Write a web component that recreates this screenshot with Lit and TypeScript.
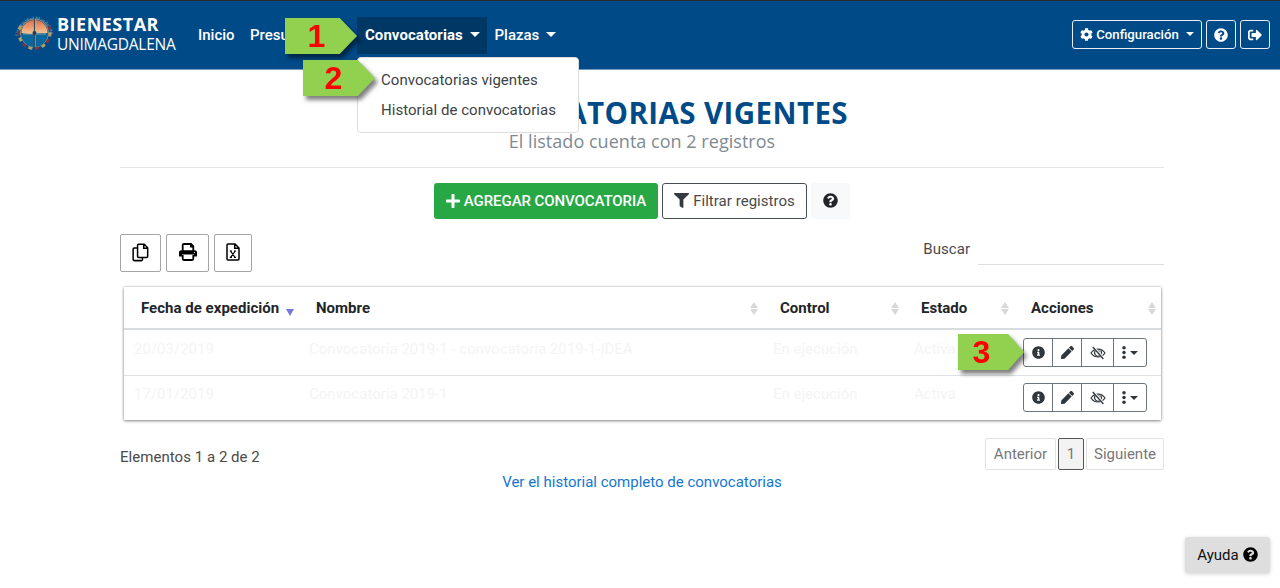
import { LitElement, html, css, svg } from "lit";
import { customElement, property } from "lit/decorators.js";

const ICONS: Record<string, { box: string; body: unknown }> = {
  question: { box: "0 0 512 512", body: svg`<path d="M504 256c0 136.997-111.043 248-248 248S8 392.997 8 256C8 119.083 119.043 8 256 8s248 111.083 248 248zM262.655 90c-54.497 0-89.255 22.957-116.549 63.758-3.536 5.286-2.353 12.415 2.715 16.258l34.699 26.31c5.205 3.947 12.621 3.008 16.665-2.122 17.864-22.658 30.113-35.797 57.303-35.797 20.429 0 45.698 13.148 45.698 32.958 0 14.976-12.363 22.667-32.534 33.976C247.128 238.528 216 254.941 216 296v4c0 6.627 5.373 12 12 12h56c6.627 0 12-5.373 12-12v-1.333c0-28.462 83.186-29.647 83.186-106.667 0-58.002-60.165-102-116.531-102zM256 338c-25.365 0-46 20.635-46 46 0 25.364 20.635 46 46 46s46-20.636 46-46c0-25.365-20.635-46-46-46z"/>` },
  info: { box: "0 0 512 512", body: svg`<path d="M256 8C119.043 8 8 119.083 8 256c0 136.997 111.043 248 248 248s248-111.003 248-248C504 119.083 392.957 8 256 8zm0 110c23.196 0 42 18.804 42 42s-18.804 42-42 42-42-18.804-42-42 18.804-42 42-42zm56 254c0 6.627-5.373 12-12 12h-88c-6.627 0-12-5.373-12-12v-24c0-6.627 5.373-12 12-12h12v-64h-12c-6.627 0-12-5.373-12-12v-24c0-6.627 5.373-12 12-12h64c6.627 0 12 5.373 12 12v100h12c6.627 0 12 5.373 12 12v24z"/>` },
  plus: { box: "0 0 448 512", body: svg`<path d="M416 208H272V64c0-17.670-14.330-32-32-32h-32c-17.670 0-32 14.330-32 32v144H32c-17.670 0-32 14.330-32 32v32c0 17.670 14.330 32 32 32h144v144c0 17.670 14.330 32 32 32h32c17.670 0 32-14.330 32-32V304h144c17.670 0 32-14.330 32-32v-32c0-17.670-14.330-32-32-32z"/>` },
  filter: { box: "0 0 512 512", body: svg`<path d="M487.976 0H24.028C2.710 0-8.047 25.866 7.058 40.971L192 225.941V432c0 7.831 3.821 15.170 10.237 19.662l80 55.980C298.020 518.690 320 507.493 320 487.980V225.941l184.947-184.970C520.021 25.896 509.338 0 487.976 0z"/>` },
  exit: { box: "0 0 512 512", body: svg`<path d="M497 273L329 441c-15 15-41 4.500-41-17v-96H152c-13.300 0-24-10.700-24-24v-96c0-13.300 10.700-24 24-24h136V88c0-21.400 25.900-32 41-17l168 168c9.300 9.400 9.300 24.600 0 34zM192 436v-40c0-6.600-5.400-12-12-12H96c-17.700 0-32-14.300-32-32V160c0-17.700 14.300-32 32-32h84c6.600 0 12-5.400 12-12V76c0-6.600-5.400-12-12-12H96c-53 0-96 43-96 96v192c0 53 43 96 96 96h84c6.600 0 12-5.400 12-12z"/>` },
  cog: { box: "0 0 512 512", body: svg`<path d="M487.4 315.7l-42.6-24.6c4.3-23.2 4.3-47 0-70.2l42.6-24.6c4.9-2.8 7.1-8.6 5.5-14-11.1-35.6-30-67.8-54.7-94.6-3.8-4.1-10-5.1-14.8-2.3L380.8 110c-17.9-15.4-38.5-27.3-60.8-35.1V25.800c0-5.600-3.900-10.500-9.400-11.700-36.700-8.200-74.300-7.800-109.200 0-5.500 1.200-9.400 6.100-9.400 11.700V75c-22.200 7.900-42.800 19.800-60.800 35.100L88.700 85.500c-4.900-2.800-11-1.900-14.800 2.300-24.700 26.700-43.600 58.900-54.700 94.600-1.700 5.400.6 11.200 5.500 14L67.300 221c-4.300 23.200-4.300 47 0 70.200l-42.600 24.600c-4.900 2.800-7.100 8.600-5.500 14 11.100 35.600 30 67.800 54.700 94.600 3.800 4.100 10 5.100 14.800 2.300l42.600-24.600c17.900 15.400 38.500 27.300 60.800 35.100v49.200c0 5.600 3.900 10.500 9.400 11.700 36.700 8.200 74.300 7.800 109.200 0 5.500-1.200 9.400-6.100 9.400-11.700v-49.200c22.200-7.900 42.800-19.800 60.800-35.100l42.600 24.600c4.900 2.800 11 1.900 14.800-2.300 24.700-26.700 43.600-58.900 54.700-94.600 1.500-5.500-.7-11.300-5.600-14.100zM256 336c-44.100 0-80-35.900-80-80s35.900-80 80-80 80 35.900 80 80-35.900 80-80 80z"/>` },
  pen: { box: "0 0 512 512", body: svg`<path d="M290.740 93.240l128.020 128.020-277.990 277.990-114.140 12.600C11.350 513.540-1.560 500.620.14 485.340l12.700-114.220 277.900-277.880zm207.200-19.060l-60.110-60.110c-18.750-18.750-49.160-18.750-67.910 0l-56.550 56.550 128.020 128.020 56.550-56.550c18.750-18.760 18.750-49.160 0-67.910z"/>` },
  eye: { box: "0 0 16 14", body: svg`<path d="M1 7C4.300 1.700 11.700 1.700 15 7C11.700 12.300 4.300 12.300 1 7Z" fill="none" stroke="currentColor" stroke-width="1.200"/><path d="M5.300 4.600a3.400 3.400 0 1 0 5.400 0" fill="none" stroke="currentColor" stroke-width="1.100"/><path d="M6.700 4.500h2.800v4z"/><path d="M3.200.8L13.800 12.800" stroke="#fff" stroke-width="2.400"/><path d="M2.800 1L13.400 13" stroke="currentColor" stroke-width="1.300"/>` },
  dots: { box: "0 0 4 14", body: svg`<circle cx="2" cy="2" r="1.900"/><circle cx="2" cy="7" r="1.900"/><circle cx="2" cy="12" r="1.900"/>` },
  copy: { box: "0 0 18 20", body: svg`<path d="M5.600 5.200H2.300Q1.200 5.200 1.200 6.300V17.500Q1.200 18.600 2.300 18.600H10Q11.100 18.600 11.100 17.500V15.400M7 1.300H13L16.600 5V14Q16.600 15.200 15.500 15.200H7Q5.900 15.200 5.900 14V2.400Q5.900 1.300 7 1.300ZM12.400 1.500V5.500H16.500" fill="none" stroke="currentColor" stroke-width="1.600"/>` },
  print: { box: "0 0 18 18", body: svg`<path d="M3.700 8V2.200Q3.700 1 4.900 1H12L14.300 3.300V8M3.700 12V15.800Q3.700 17 4.900 17H13.100Q14.300 17 14.300 15.800V12" fill="none" stroke="currentColor" stroke-width="1.800"/><path d="M11 .6h1.200L14.800 3.200V4.500H11zM2.600 7.200H15.400Q18 7.200 18 9.600V13.600H15V11.600H3V13.600H0V9.600Q0 7.200 2.600 7.200Z"/><circle cx="15.400" cy="9.600" r=".6" fill="#fff"/>` },
  excel: { box: "0 0 14 18", body: svg`<path d="M2 1H9L13 5V16Q13 17 12 17H2Q1 17 1 16V2Q1 1 2 1ZM8.700 1.200V5.300H12.800" fill="none" stroke="currentColor" stroke-width="1.500"/><path d="M4.500 8L9 14.300M9.300 8L4.600 14.300M3.700 8H6M8 8H10M3.700 14.300H6M8 14.300H10" fill="none" stroke="currentColor" stroke-width="1.200"/>` },
};

const icon = (name: string, cls = "") => html`<svg class="icon ${name} ${cls}" viewBox=${ICONS[name].box} fill="currentColor">${ICONS[name].body}</svg>`;

const GEARS = [-20, 5, 30, 55, 80, 105, 130, 155, 180, 200];

@customElement("step-callout")
class StepCallout extends LitElement {
  @property() label = "";
  static styles = css`
    :host { display: block; width: 72px; height: 36px; filter: drop-shadow(3px 4px 2px rgba(0, 0, 0, 0.5)); }
    .shape { box-sizing: border-box; width: 100%; height: 100%; padding-right: 11px; background: #92d050; color: #f00;
      clip-path: polygon(0 0, 76% 0, 100% 50%, 76% 100%, 0 100%);
      display: flex; align-items: center; justify-content: center;
      font: bold 32px/36px "Liberation Sans", Arial, sans-serif; }
    :host(.three) .shape { padding-right: 19px; }
    :host(.one) .shape { padding-right: 9px; }
  `;
  render() { return html`<div class="shape">${this.label}</div>`; }
}

@customElement("app-root")
class AppRoot extends LitElement {
  static styles = css`
    * { box-sizing: border-box; }
    :host { display: block; position: relative; width: 1280px; height: 588px; overflow: hidden; background: #fff;
      font: 15px/22px Roboto, sans-serif; letter-spacing: 0.03px; color: #4a4a4a; }
    .icon { display: block; flex: none; }
    .caret { width: 0; height: 0; border: 4.500px solid transparent; border-top-color: currentColor; border-bottom: 0; }

    .top { display: flex; height: 70px; padding: 11px 10px 0 15px; background: #004a87; border-top: 1px solid #232b33; border-bottom: 1px solid #6f97bb; color: #fff; }
    .seal { width: 39px; height: 40px; overflow: visible; }
    .brand { width: 138px; margin-left: 3px; font-family: "Open Sans", sans-serif; white-space: nowrap; }
    .brand-a { font-size: 18px; font-weight: 700; line-height: 20px; padding-top: 2px; letter-spacing: 0.5px; }
    .brand-b { font-size: 15.500px; line-height: 20px; letter-spacing: -0.25px; }
    .nav { display: flex; margin-top: 5px; height: 37px; align-items: center; font-weight: 500; letter-spacing: 0; }
    .nav-home { width: 55px; padding: 0 0 2px 3px; }
    .nav-budget { width: 107px; padding-bottom: 2px; }
    .drop { position: relative; height: 37px; display: flex; align-items: center; gap: 7px; padding: 0 7px 1px 7.500px; }
    .drop > .caret { border-width: 5px; border-bottom: 0; margin-top: -2px; }
    .open { width: 130px; padding-left: 8px; background: #003865; font-weight: 700; letter-spacing: 0.06px; }
    .menu { position: absolute; left: 0; top: 40px; width: 222px; height: 76px; padding: 7px 0 0 23px; background: #fff; border: 1px solid #ddd; border-radius: 4px; color: #3d4246; font-weight: 400; letter-spacing: 0.03px; z-index: 2; }
    .menu-item { height: 30px; line-height: 30px; white-space: nowrap; }
    .tools { display: flex; gap: 4px; margin: 8px 0 0 auto; height: 30px; }
    .tool { display: flex; align-items: center; justify-content: center; width: 30px; height: 29px; border: 1px solid #e8eef4; border-radius: 3px; font-size: 13.200px; font-weight: 500; letter-spacing: 0; }
    .tool .icon { width: 14px; height: 14px; }
    .config { width: 130px; gap: 3px; }
    .config .cog { width: 13px; height: 13px; }
    .config .caret { margin: -2px 0 0 4px; border-width: 4px; border-bottom: 0; }

    .page { width: 1044px; margin-left: 120px; }
    .heading { height: 98px; padding-top: 25px; border-bottom: 1px solid #e3e4e5; text-align: center; font-family: "Open Sans", sans-serif; }
    .title { margin: 0; font-size: 29.500px; line-height: 35px; font-weight: 700; color: #004a87; letter-spacing: 0.42px; }
    .sub { font-size: 18px; line-height: 22px; color: #808a92; letter-spacing: 0.03px; }
    .actions { display: flex; justify-content: center; gap: 4px; padding-top: 15px; height: 66px; }
    .btn { display: flex; align-items: center; justify-content: center; height: 36px; border-radius: 3px; gap: 4px; white-space: nowrap; }
    .add { width: 224px; background: #28a745; color: #fff; font-weight: 500; letter-spacing: -0.08px; }
    .add .icon { width: 14px; height: 16px; }
    .filt { width: 145px; border: 1px solid #454d55; }
    .filt .icon { width: 15px; height: 15px; color: #343a40; margin-top: -2px; }
    .help { width: 39px; background: #f8f9fa; color: #212529; }
    .help .icon { width: 15px; height: 15px; margin-top: -2px; }
    .bar { display: flex; height: 53px; }
    .exports { display: flex; gap: 5px; flex: 1; color: #000; }
    .export { display: flex; align-items: center; justify-content: center; height: 38px; padding-bottom: 2px; border: 1px solid #a5a5a5; border-radius: 2px; }
    .w-copy { width: 41px; } .w-print { width: 43px; } .w-excel { width: 38px; }
    .copy { width: 17px; height: 19px; } .print { width: 18px; height: 18px; } .excel { width: 14px; height: 18px; }
    .search { display: flex; gap: 8px; height: 31px; line-height: 30px; }
    .field { width: 186px; border-bottom: 1px solid #dedede; }

    .grid { margin: 0 3px 0 4px; height: 133px; background: #fff; box-shadow: 0 1px 3px rgba(0,0,0,.42), 0 0 2px rgba(0,0,0,.22); }
    .row { display: grid; grid-template-columns: 175px 464px 141px 110px 147px; height: 45px; color: #f4f4f4; letter-spacing: 0.01px; }
    .row + .row { border-top: 1px solid #dee2e6; }
    .head { height: 43px; color: #212529; font-weight: 700; letter-spacing: 0.02px; border-bottom: 2px solid #d9dcdf; }
    .row.first { border-top: 0; }
    .th { display: flex; justify-content: space-between; padding: 10px 6px 0 17px; white-space: nowrap; }
    .th:nth-child(n+2):nth-child(-n+4) { padding-right: 5px; }
    .th:last-child { padding-right: 5px; }
    .td { padding: 8px 0 0 10px; white-space: nowrap; }
    .second .td { padding-top: 7px; }
    .sort { width: 8px; height: 13px; margin-top: 5px; color: #d8d8d8; }
    .sorted { width: 8px; height: 7px; margin: 12px -1px 0 0; color: #7777dd; }
    .group { display: flex; margin: 8px 0 0 9px; width: 124px; height: 29px; border: 1px solid #6c757d; border-radius: 3px; color: #2f363c; }
    .second .group { margin-top: 7px; }
    .cell { display: flex; align-items: center; justify-content: center; gap: 4px; border-left: 1px solid #6c757d; width: 29px; }
    .cell:first-child { border-left: 0; width: 28px; }
    .wide { width: 32px; } .last { width: 33px; }
    .info, .pen { width: 13px; height: 13px; } .eye { width: 16px; height: 14px; } .dots { width: 4px; height: 13px; }
    .cell .caret { border-width: 4px; border-bottom: 0; }

    .foot { display: flex; justify-content: space-between; padding-top: 18px; height: 51px; }
    .count { line-height: 38px; letter-spacing: 0.04px; }
    .pager { display: flex; gap: 2px; color: #777; letter-spacing: 0; }
    .pg { display: flex; align-items: center; justify-content: center; height: 32px; border: 1px solid #e2e2e2; border-radius: 2px; }
    .prev { width: 71px; } .num { width: 26px; background: #f3f3f3; border-color: #555; } .next { width: 78px; }
    .history { text-align: center; color: #1476d1; letter-spacing: 0; }
    .assist { position: absolute; right: 10px; bottom: 15px; width: 85px; height: 36px; display: flex; align-items: center; justify-content: center; gap: 4px; background: #dedede; border-radius: 3px; color: #111; box-shadow: 0 1px 4px rgba(0,0,0,.18); letter-spacing: 0.05px; }
    .assist .icon { width: 15px; height: 15px; color: #000; margin-top: -2px; }
    step-callout { position: absolute; z-index: 3; }
    .one { left: 285px; top: 18px; } .two { left: 303px; top: 60px; } .three { left: 958px; top: 334px; width: 66px; }
  `;

  private seal() {
    return html`<svg class="seal" viewBox="0 0 39 40">
      <defs>
        <linearGradient id="sky" x2="0" y2="1"><stop offset="0" stop-color="#d96f4f"/><stop offset=".6" stop-color="#f2a374"/><stop offset="1" stop-color="#e9c9a0"/></linearGradient>
        <path id="arc" d="M3.500 24A16 16 0 1 1 35.500 24"/>
      </defs>
      <text fill="#a9b9bd" font-family="Liberation Serif" font-size="5" letter-spacing="0"><textPath href="#arc">Universidad Magdalena</textPath></text>
      ${GEARS.map((a, i) => svg`<rect x="32" y="19" width="4.500" height="4.200" rx="1" fill=${i % 2 ? "#b6a05d" : "#7d3445"} transform="rotate(${a} 19.500 21)"/>`)}
      <circle cx="19.500" cy="21" r="14" fill="#155c91" stroke="#8e8f7a" stroke-width="1"/>
      <path d="M6.500 21A13 13 0 0 1 32.500 21Q26 22 19.500 22Q13 22 6.500 21Z" fill="url(#sky)"/>
      <path d="M6.500 22Q13 24 19.500 22T32.500 22A13 13 0 0 1 6.500 22Z" fill="#08679e"/>
      <path d="M19.500 7V36" stroke="#173f5b" stroke-width="1.200"/><path d="M20.300 7V35M8 22H31" stroke="#d9c09a" stroke-width=".6"/>
      <circle cx="19.500" cy="21" r="2" fill="#183e58"/>
    </svg>`;
  }

  private sort() { return html`<svg class="sort" viewBox="0 0 8 13" fill="currentColor"><path d="M4 0L8 6H0zM0 7H8L4 13z"/></svg>`; }

  private row(cells: string[], cls: string) {
    return html`<div class="row ${cls}">${cells.map((c) => html`<div class="td">${c}</div>`)}
      <div><div class="group"><span class="cell">${icon("info")}</span><span class="cell">${icon("pen")}</span><span class="cell wide">${icon("eye")}</span><span class="cell last">${icon("dots")}<i class="caret"></i></span></div></div></div>`;
  }

  render() {
    return html`
      <header class="top">
        ${this.seal()}
        <div class="brand"><div class="brand-a">BIENESTAR</div><div class="brand-b">UNIMAGDALENA</div></div>
        <nav class="nav">
          <span class="nav-home">Inicio</span><span class="nav-budget">Presu</span>
          <div class="drop open">Convocatorias <i class="caret"></i>
            <div class="menu"><div class="menu-item">Convocatorias vigentes</div><div class="menu-item">Historial de convocatorias</div></div>
          </div>
          <div class="drop">Plazas <i class="caret"></i></div>
        </nav>
        <div class="tools">
          <span class="tool config">${icon("cog")}Configuración<i class="caret"></i></span>
          <span class="tool">${icon("question")}</span><span class="tool">${icon("exit")}</span>
        </div>
      </header>
      <main class="page">
        <div class="heading"><h1 class="title">CONVOCATORIAS VIGENTES</h1><div class="sub">El listado cuenta con 2 registros</div></div>
        <div class="actions"><span class="btn add">${icon("plus")}AGREGAR CONVOCATORIA</span><span class="btn filt">${icon("filter")}Filtrar registros</span><span class="btn help">${icon("question")}</span></div>
        <div class="bar">
          <div class="exports"><span class="export w-copy">${icon("copy")}</span><span class="export w-print">${icon("print")}</span><span class="export w-excel">${icon("excel")}</span></div>
          <div class="search">Buscar<span class="field"></span></div>
        </div>
        <section class="grid">
          <div class="row head">
            <div class="th">Fecha de expedición<svg class="sorted" viewBox="0 0 8 7" fill="currentColor"><path d="M0 0H8L4 7z"/></svg></div>
            ${["Nombre", "Control", "Estado", "Acciones"].map((t) => html`<div class="th">${t}${this.sort()}</div>`)}
          </div>
          ${this.row(["20/03/2019", "Convocatoria 2019-1 - convocatoria 2019-1-IDEA", "En ejecución", "Activa"], "first")}
          ${this.row(["17/01/2019", "Convocatoria 2019-1", "En ejecución", "Activa"], "second")}
        </section>
        <div class="foot"><span class="count">Elementos 1 a 2 de 2</span>
          <div class="pager"><span class="pg prev">Anterior</span><span class="pg num">1</span><span class="pg next">Siguiente</span></div></div>
        <div class="history">Ver el historial completo de convocatorias</div>
      </main>
      <step-callout class="one" label="1"></step-callout>
      <step-callout class="two" label="2"></step-callout>
      <step-callout class="three" label="3"></step-callout>
      <div class="assist">Ayuda ${icon("question")}</div>
    `;
  }
}
